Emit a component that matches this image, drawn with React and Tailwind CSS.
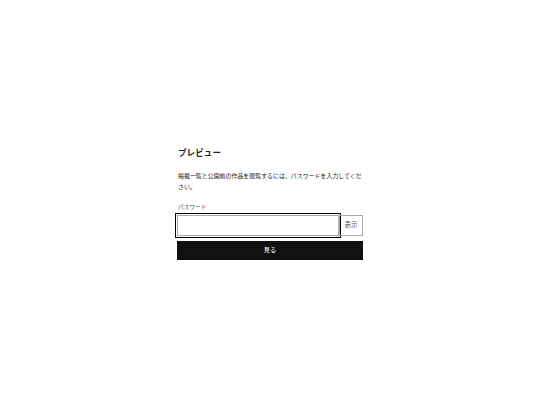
import React from "react";

const App = () => {
    return (
        <div className="min-h-screen bg-white pt-[146px]" style={{ fontFamily: '"Noto Sans CJK JP", "Noto Sans", sans-serif' }}>
            <div className="mx-auto w-[186px]">
                <h2 className="text-[8.6px] leading-[12px] font-bold text-[#222] pl-[1px]">プレビュー</h2>

                <p className="mt-[11.5px] text-[5.95px] leading-[11px] text-[#222] pl-[1px] pr-[1px]">
                    掲載一覧と公開前の作品を閲覧するには、パスワードを入力してください。
                </p>

                <form className="mt-[11.5px]">
                    <label className="block text-[5.7px] leading-[8px] text-[#555] pl-[1px]">パスワード</label>

                    <div className="mt-[4px] flex">
                        <input
                            type="password"
                            className="h-[21px] w-0 min-w-0 flex-1 border border-[#aaa] bg-white outline outline-1 outline-offset-1 outline-black"
                        />
                        <button type="button" className="h-[21px] w-[24px] shrink-0 whitespace-nowrap border border-[#aaa] text-[6.4px] leading-none text-[#555]">
                            表示
                        </button>
                    </div>

                    <button
                        type="submit"
                        className="mt-[5px] block h-[19px] w-full bg-[#111] text-[6.2px] leading-none text-white"
                    >
                        見る
                    </button>
                </form>
            </div>
        </div>
    );
}

export default App;
